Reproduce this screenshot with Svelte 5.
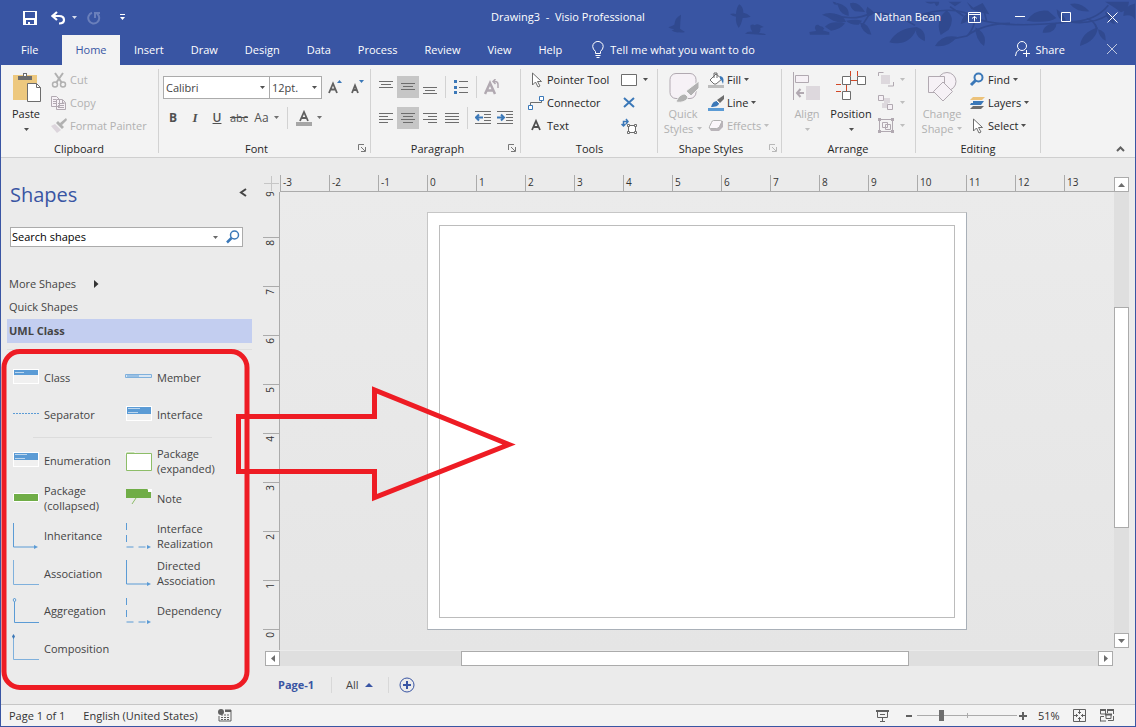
<script>
  const tabs = ['Insert', 'Draw', 'Design', 'Data', 'Process', 'Review', 'View', 'Help'];
  const topTicks = [-3, -2, -1, 0, 1, 2, 3, 4, 5, 6, 7, 8, 9, 10, 11, 12, 13];
  const sideTicks = [8, 7, 6, 5, 4, 3, 2, 1, 0];
  const basics = [
    ['class', 'Class'],
    ['member', 'Member'],
    ['separator', 'Separator'],
    ['interface', 'Interface']
  ];
  const stencils = [
    ['enumeration', 'Enumeration'],
    ['expanded', 'Package (expanded)'],
    ['collapsed', 'Package (collapsed)'],
    ['note', 'Note'],
    ['inherit', 'Inheritance'],
    ['realize', 'Interface Realization'],
    ['assoc', 'Association'],
    ['directed', 'Directed Association'],
    ['aggregate', 'Aggregation'],
    ['depend', 'Dependency'],
    ['compose', 'Composition']
  ];
  let search = $state('Search shapes');
  let zoom = $state(23);
</script>

{#snippet caret()}
  <svg class="caret" width="5" height="3" viewBox="0 0 5 3"><path d="M0 0h5L2.5 3z" fill="currentColor" /></svg>
{/snippet}

{#snippet small(name)}
  <svg width="16" height="16" viewBox="0 0 16 16" fill="none" stroke-width="1">
    {#if name === 'cut'}
      <g stroke="#b1b1b1" stroke-width="2"><path d="M4 1l7 10M12 1L5 11" /><circle cx="4" cy="12.500" r="2.500" stroke-width="1.500" /><circle cx="12" cy="12.500" r="2.500" stroke-width="1.500" /></g>
    {:else if name === 'copy'}
      <g stroke="#b1a9b1" fill="#f6f1f6"><path d="M.5 1.500h5l3 3v7h-8zM5.500 4.500h6l3 3v7h-9z" /><path d="M2 4.500h3M2 6.500h3M2 8.500h3M7 8.500h6M7 10.500h6M7 12.500h6M11.500 5v3H14" /></g>
    {:else if name === 'painter'}
      <path d="M15 0l1 2-5 5-2-2zM7 3l6 6-2 2-6-6z" fill="#b1b1b1" /><path d="M4 6l6 6-4 3L0 8z" fill="#dcd5dc" />
    {:else if name === 'pointer'}
      <path d="M4.500 1v12l3-3 2.500 5 2-1-2.500-4.500h4z" stroke="#6d6d6d" fill="#fff" />
    {:else if name === 'connector'}
      <path d="M2.500 10V7.500H13.500V5" stroke="#6d6d6d" /><path d="M.5 10.500h4v4h-4zM11.500 1.500h4v4h-4z" stroke="#3b78b8" fill="#fff" />
    {:else if name === 'text'}
      <path d="M4 12L8 3l4 9M5.500 9h5" stroke="#505050" stroke-width="1.800" />
    {:else if name === 'rect'}
      <path d="M.5 2.500h15v11H.5z" stroke="#6d6d6d" fill="#fff" />
    {:else if name === 'cross'}
      <path d="M3 3l10 9M13 3L3 12" stroke="#3b78b8" stroke-width="2" />
    {:else if name === 'transform'}
      <path d="M7.500 7.500h7v7h-7z" stroke="#6d6d6d" fill="#fff" /><path d="M6.500 6.500h2v2h-2zM13.500 6.500h2v2h-2zM6.500 13.500h2v2h-2zM13.500 13.500h2v2h-2z" fill="#fff" stroke="#6d6d6d" /><path d="M2.500 8V3.500h4M.5 6l2 2 2-2M5 1l2 2.500L5 6" stroke="#3b78b8" stroke-width="1.500" />
    {:else if name === 'fill'}
      <path d="M0 13h16v3H0z" fill="#bcbcbc" /><path d="M2 8l6-6 6 5-6 5H6z" fill="#fff" stroke="#6d6d6d" /><path d="M6 6V1h3v5" stroke="#6d6d6d" /><path d="M12 4c4 1 4 4 3 8-1-2-1-4-3-5z" fill="#3b78b8" />
    {:else if name === 'line'}
      <path d="M0 13h16v3H0z" fill="#5b9bd5" /><path d="M16 0v4l-4 4-3-3z" fill="#6d6d6d" /><path d="M3 12c1-4 3-6 6-6l2 2c0 3-4 4-8 4z" fill="#3b78b8" /><path d="M9 6l2 2" stroke="#fff" />
    {:else if name === 'effects'}
      <path d="M5 3h10v6l-4 4H3L1 10z" fill="#b9b4b9" /><path d="M5.500 2.500h7q2 0 1 2l-2 4q-1 2-3 2h-6q-2 0-1-2l2-4q.6-2 2-2z" fill="#faf6fa" stroke="#b1b1b1" />
    {:else if name === 'front'}
      <path d="M3 3h9v9H3z" fill="#ddd8dd" /><path d="M.5 4V.5h5M15.500 10v4H10" stroke="#b1a9b1" />
    {:else if name === 'back'}
      <path d="M6 3h6v5H6zM4 8h6v5H4z" fill="#ddd8dd" /><path d="M.5.5h5v5h-5zM9.500 9.500h5v5h-5z" fill="#f6f1f6" stroke="#b1a9b1" />
    {:else if name === 'group'}
      <path d="M0 0h3v3H0zM13 0h3v3h-3zM0 12h3v3H0zM13 12h3v3h-3z" fill="#b1a9b1" /><path d="M3 1.500h10M3 13.500h10M1.500 3v9M14.500 3v9M4.500 4.500h5v5h-5zM7.500 6.500h5v5h-5z" stroke="#b1a9b1" />
    {:else if name === 'find'}
      <circle cx="9.500" cy="5.500" r="4" stroke="#3b78b8" stroke-width="2" /><path d="M6.500 8.500L2 13" stroke="#3b78b8" stroke-width="3" />
    {:else if name === 'layers'}
      <path d="M4 2h12l-3 3H1z" fill="#ecc27a" /><path d="M4 6h11l-3 4H1l1-2h2z" fill="#3b78b8" /><path d="M4 11h11l-3 3H1z" fill="#6d6d6d" />
    {/if}
  </svg>
{/snippet}

{#snippet big(name)}
  <svg width="32" height="32" viewBox="0 0 32 32" fill="none">
    {#if name === 'paste'}
      <path d="M3 4h24v25H3z" fill="#edc87e" /><path d="M8 9V5h5V2h4v3h5v4z" fill="#6d6d6d" /><path d="M14 3h2v2h-2z" fill="#fff" /><path d="M17.500 12.500h9l4 4v14h-13z" fill="#fff" stroke="#6d6d6d" /><path d="M26.500 12.500v4h4" stroke="#6d6d6d" />
    {:else if name === 'quick'}
      <rect x="3" y="2.500" width="26" height="25" rx="6" fill="#f6f1f6" stroke="#b1a9b1" /><path d="M32 10v7l-8 8-5-5z" fill="#b1b1b1" stroke="#f3f3f3" /><path d="M9 31c2-5 5-8 9-8l3 3c-1 4-6 6-12 5z" fill="#b1b1b1" stroke="#f3f3f3" />
    {:else if name === 'align'}
      <path d="M2.500 1v28M4.500 4.500h13v7h-13z" stroke="#b1a9b1" fill="#f6f1f6" /><path d="M15 15h14v14H15z" fill="#ddd8dd" /><path d="M13 22H6M9.500 18L6 22l3.500 4" stroke="#b1a9b1" stroke-width="2" />
    {:else if name === 'position'}
      <path d="M15.500 0v5M22.500 0v5M16 9.500h6M1 13.500h5M1 20.500h5M11.500 14v6" stroke="#d24726" /><path d="M7.500 5.500h8v8h-8zM22.500 5.500h8v8h-8zM7.500 20.500h8v8h-8z" fill="#fff" stroke="#6d6d6d" />
    {:else if name === 'change'}
      <circle cx="21" cy="10.500" r="9" fill="#f6f1f6" stroke="#b1a9b1" /><path d="M2.500 5.500h16v16h-16z" fill="#f6f1f6" stroke="#b1a9b1" /><path d="M17 11l9.500 9.500L17 30l-9.500-9.500z" fill="#f6f1f6" stroke="#b1a9b1" />
    {/if}
  </svg>
{/snippet}

{#snippet para(name)}
  <svg width="16" height="16" viewBox="0 0 16 16" fill="none" stroke="#6d6d6d">
    {#if name === 'top'}<path d="M1 2.500h14M3 5.500h10M1 8.500h14" />
    {:else if name === 'middle'}<path d="M1 4.500h14M3 7.500h10M1 10.500h14" />
    {:else if name === 'bottom'}<path d="M1 8.500h14M3 11.500h10M1 14.500h14" />
    {:else if name === 'left'}<path d="M1 3.500h14M1 6.500h9M1 9.500h14M1 12.500h9" />
    {:else if name === 'center'}<path d="M1 3.500h14M3 6.500h10M1 9.500h14M3 12.500h10" />
    {:else if name === 'right'}<path d="M1 3.500h14M6 6.500h9M1 9.500h14M6 12.500h9" />
    {:else if name === 'justify'}<path d="M1 3.500h14M1 6.500h14M1 9.500h14M1 12.500h14" />
    {:else if name === 'bullets'}<path d="M6 2.500h9M6 8.500h9M6 13.500h9" /><path d="M1 1h3v3H1zM1 7h3v3H1zM1 12h3v3H1z" fill="#3b78b8" stroke="none" />
    {:else if name === 'outdent' || name === 'indent'}
      <path d="M0 1.500h16M9 4.500h7M9 7.500h7M9 10.500h7M0 13.500h16" />
      {#if name === 'outdent'}<path d="M8 7.500H1.500M4 4.500l-3 3 3 3" stroke="#3b78b8" stroke-width="2" />
      {:else}<path d="M0 7.500h6.500M4 4.500l3 3-3 3" stroke="#3b78b8" stroke-width="2" />{/if}
    {:else if name === 'rotate'}
      <path d="M1 15L6 4l5 11M3 11.500h6" stroke="#b1a9b1" stroke-width="2.500" /><path d="M9 2.500h2q3 0 3 3V9M11.500 0L9 2.500 11.500 5" stroke="#b1a9b1" stroke-width="1.500" />
    {/if}
  </svg>
{/snippet}

{#snippet shape(name)}
  <svg width="28" height="28" viewBox="0 0 28 28" fill="none" stroke="#5b9bd5">
    {#if name === 'class' || name === 'interface' || name === 'enumeration'}
      <g stroke="none"><path d="M1 5h26v15H1z" fill="#fff" /><path d="M2 11h24v8H2z" fill="#f0f0f0" />
        {#if name === 'class'}<path d="M2 6h24v5H2z" fill="#5b9bd5" /><path d="M3 8h9v1H3z" fill="#bdd7ee" />
        {:else}<path d="M2 6h24v7H2z" fill="#5b9bd5" /><path d="M3 7h12v1H3zM3 11h10v1H3z" fill="#bdd7ee" />{/if}</g>
    {:else if name === 'member'}
      <path d="M.5 10.500h26v3H.5z" fill="#d9e6f3" stroke="#7fb0dc" /><path d="M2 12h12" stroke="#5b9bd5" />
    {:else if name === 'separator'}<path d="M1 12.500h26" stroke-dasharray="2 1" />
    {:else if name === 'expanded'}
      <path d="M1 5h9v3H1z" fill="#8dbd68" stroke="#fff" /><path d="M1.500 6.500h25v17h-25z" fill="#fff" stroke="#8dbd68" />
    {:else if name === 'collapsed'}<path d="M1.500 9.500h25v8h-25z" fill="#70ad47" stroke="#fff" />
    {:else if name === 'note'}<path d="M1 5h21l4 3v6H1z" fill="#70ad47" stroke="none" /><path d="M23 5v3h4V5z" fill="#fff" stroke="none" /><path d="M11 14l-4 6" stroke="#8dbd68" />
    {:else if name === 'inherit' || name === 'directed'}<path d="M1.500 1v24H24" /><path d="M22 23l4 2-4 2z" fill="#5b9bd5" stroke="none" />
    {:else if name === 'realize' || name === 'depend'}<path d="M1.500 1v24H24" stroke-dasharray="7 5" /><path d="M22 23l4 2-4 2z" fill="#5b9bd5" stroke="none" />
    {:else if name === 'assoc'}<path d="M1.500 1v24.500H27" stroke="#7fb0dc" />
    {:else if name === 'aggregate'}<path d="M2.500 5v20.500H27" /><path d="M2.500 1l1.500 2-1.500 2L1 3z" />
    {:else if name === 'compose'}<path d="M1.500 4v21.500H27" stroke="#7fb0dc" /><path d="M1.500 0L3 2.500 1.500 5 0 2.500z" fill="#3b78b8" stroke="none" />{/if}
  </svg>
{/snippet}

{#snippet magnifier()}
  <svg width="14" height="14" viewBox="0 0 14 14" fill="none" stroke="#3b78b8"><circle cx="8.500" cy="5" r="4" stroke-width="1.500" /><path d="M5.500 8L1 12.500" stroke-width="2.500" /></svg>
{/snippet}

{#snippet foot(label, launcher, off)}
  <div class="foot"><span>{label}</span>
    {#if launcher}
      <button class="launch" class:off aria-label="{label} settings"><svg width="8" height="8" viewBox="0 0 8 8" fill="none" stroke="currentColor"><path d="M.5 6V.5H6M3 3l4 4M7.500 3v4.500H3" /></svg></button>
    {/if}
  </div>
{/snippet}

<div class="app">
  <header>
    <svg class="art" width="495" height="65" viewBox="0 0 1485 195" aria-hidden="true">
      <g fill="#30498f">
        <path d="M85 82q12-4 18-8 2-22 20-30-2 20-3 42l15 10q-10 3-18 1-16 1-22-6l8-3q-12-1-18-6z" />
        <path d="M270 42q10-3 18 0 2-22 10-29 12 8 12 25 12 2 22 12-12 4-24 4-4 20-12 30-10-16-8-34-12-2-18-8z" />
        <path d="M315 101q8-8 22-6-8-10-5-20 8-4 12 1 6-6 14-2l13 7-10 3q2 12-5 15 14 1 22 4l-4 2z" />
        <path d="M508 96l20-3q-6-8-2-16 8-6 13 1 10 0 14 8l-5 5 20 6v7h-58z" />
        <path d="M546 44q22-10 50 0 16 6 22 22-18 4-38-4-16-12-34-18zM555 80q18-20 60-10-14 20-42 22zM590 8q18 4 28 14t8 26q-24-6-28-20zM578 5q12 0 14 10l-10-2zM630 10q24-8 45 26l-30-2q-14-8-15-24zM682 20q-8 16 3 28 18-2 14-14zM660 68q24-2 34 36-26-2-34-36zM618 62q30-6 48 0l-10 12q-24 2-38-12z" />
        <path d="M748 127q24-44 84-46-16 44-52 48-20 2-32-2zM832 82q-14 22 22 42 6-32-22-42zM855 5h42q2 10-8 14l-6-10q-14 6-28-4zM840 48q20-20 60 0-24 18-60 0zM902 105q-18-44 18-74 28 24 6 58zM885 138q20-36 66-28-22 32-66 28zM962 72q8-32 22-30 14 20-22 30zM925 5h40l-20 14zM980 5l20 18 28-14 20 34-30-6-24-10zM1006 82q0 38 26 56 12-36-26-56zM1160 62q24-36 64-30l25 22q-28 18-89 8zM1208 98q2-26 42-30-2 34-42 30zM1250 28q22 14 30 40-30-8-30-40zM1320 138q4-40 54-56-6 42-54 56zM1374 88q24 4 23 34-20-8-23-34zM1290 12q32-8 58 22-40 2-58-22zM1395 5h72q-2 26-24 32-20-16-48-32zM1395 35q22 6 30 38-24-8-30-38zM1450 48q0-30 36-38v50q-10-20-36-12z" />
      </g>
      <g fill="none" stroke="#30498f" stroke-width="5">
        <path d="M585 46q60 18 110-8 70 0 130 38M690 40l-26 40M825 50q120-42 190 8 90 28 270 8 80 0 120-50M1110 70q-80 0-130 38l-50 10M985 104q20-24 20-54M1290 66q70 8 115-22M1370 86q-5-24-30-30M930 20l40 28M1040 64l-10-40" />
      </g>
    </svg>

    <div class="titlebar">
      <div class="quick">
        <button aria-label="Save"><svg width="14" height="14" viewBox="0 0 14 14"><path d="M0 0h14v14H0z" fill="#fff" /><path d="M2 1h10v6H2zM3 9h8v4H7v-2H5v2H3z" fill="#3955a3" /></svg></button>
        <button class="undo" aria-label="Undo"><svg width="15" height="14" viewBox="0 0 15 14" fill="none" stroke="#fff"><path d="M6 1L1.500 5 6 9M2 5h6q5 0 5 4 0 3.500-5 3.500" stroke-width="2.200" /></svg></button>
        <button class="pick" aria-label="Undo list">{@render caret()}</button>
        <button class="redo" aria-label="Repeat"><svg width="14" height="14" viewBox="0 0 14 14" fill="none" stroke="#6a7fbb" stroke-width="2"><path d="M5 1.800a5.500 5.500 0 1 0 5 .8M8 7V2h5" /></svg></button>
        <button aria-label="Customize toolbar"><svg width="7" height="7" viewBox="0 0 7 7" fill="#fff"><path d="M1 0h5v1H1zM1 3h5L3.500 6z" /></svg></button>
      </div>
      <div class="title">Drawing3&nbsp; -&nbsp; Visio Professional</div>
      <div class="window">
        <span>Nathan Bean</span>
        <button aria-label="Ribbon display"><svg width="13" height="11" viewBox="0 0 13 11" fill="none" stroke="#fff"><path d="M.5.5h12v10H.5zM1 2.500h11M6.500 9.500V4.500M4 6.500l2.500-2 2.500 2" /></svg></button>
        <button aria-label="Minimize"><svg width="10" height="10" viewBox="0 0 10 10" stroke="#fff"><path d="M0 4.500h10" /></svg></button>
        <button aria-label="Maximize"><svg width="10" height="10" viewBox="0 0 10 10" stroke="#fff" fill="none"><path d="M.5.5h9v9h-9z" /></svg></button>
        <button aria-label="Close"><svg width="11" height="11" viewBox="0 0 11 11" stroke="#fff"><path d="M.5.5l10 10M10.500.5l-10 10" /></svg></button>
      </div>
    </div>

    <nav>
      <button class="file">File</button>
      <button class="on">Home</button>
      {#each tabs as t}<button>{t}</button>{/each}
      <button class="tell"><svg width="12" height="17" viewBox="0 0 12 17" fill="none" stroke="#fff"><path d="M3.500 12.500V10.500Q.7 8 .7 5.500a5.200 5 0 0 1 10.500 0q0 2.500-2.700 5v2zM3.500 14.500h5M4.500 16.500h3" /></svg>Tell me what you want to do</button>
      <button class="share"><svg width="15" height="16" viewBox="0 0 15 16" fill="none" stroke="#fff"><circle cx="7" cy="5" r="4.500" /><path d="M.5 15q0-5 4-6.500M11.500 9v7M8 12.500h7" /></svg>Share</button>
      <button class="shut" aria-label="Close ribbon"><svg width="10" height="10" viewBox="0 0 10 10" stroke="#c0c8de"><path d="M0 0l10 10M10 0L0 10" /></svg></button>
    </nav>
  </header>

  <section class="ribbon">
    <div class="group clipboard">
      <div class="tools">
        <button class="big">{@render big('paste')}<span>Paste</span><i>{@render caret()}</i></button>
        <div class="col">
          <button class="cmd off">{@render small('cut')}Cut</button>
          <button class="cmd off">{@render small('copy')}Copy</button>
          <button class="cmd off">{@render small('painter')}Format Painter</button>
        </div>
      </div>
      {@render foot('Clipboard')}
    </div>

    <div class="group font">
      <div class="rows">
        <div class="row">
          <label class="combo family"><select aria-label="Font"><option>Calibri</option></select>{@render caret()}</label>
          <label class="combo size"><select aria-label="Font size"><option>12pt.</option></select>{@render caret()}</label>
          <button class="sq grow" aria-label="Grow font"><svg width="14" height="16" viewBox="0 0 14 16" fill="none"><path d="M1 14L5 4.500 9 14M2.500 10.500h5" stroke="#606060" stroke-width="1.800" /><path d="M9 4h5l-2.500-3z" fill="#3b78b8" /></svg></button>
          <button class="sq" aria-label="Shrink font"><svg width="14" height="16" viewBox="0 0 14 16" fill="none"><path d="M2 14l3-7.500L8 14M3 11h4" stroke="#606060" stroke-width="1.800" /><path d="M9 1h5l-2.500 3z" fill="#3b78b8" /></svg></button>
        </div>
        <div class="row letters">
          <button class="sq"><b>B</b></button>
          <button class="sq"><em>I</em></button>
          <button class="sq"><u>U</u></button>
          <button class="sq"><s>abc</s></button>
          <button class="sq wide case">Aa{@render caret()}</button>
          <hr />
          <button class="sq wide" aria-label="Font color"><svg width="16" height="16" viewBox="0 0 16 16" fill="none"><path d="M4 11L8 2l4 9M5.500 8h5" stroke="#606060" stroke-width="1.800" /><path d="M0 12h16v4H0z" fill="#a6a6a6" /></svg>{@render caret()}</button>
        </div>
      </div>
      {@render foot('Font', true)}
    </div>

    <div class="group paragraph">
      <div class="rows">
        <div class="row">
          {#each ['top', 'middle', 'bottom'] as p}<button class="sq" class:sel={p === 'middle'} aria-label={p}>{@render para(p)}</button>{/each}
          <hr /><button class="sq" aria-label="Bullets">{@render para('bullets')}</button>
          <hr /><button class="sq" aria-label="Rotate text">{@render para('rotate')}</button>
        </div>
        <div class="row">
          {#each ['left', 'center', 'right', 'justify'] as p}<button class="sq" class:sel={p === 'center'} aria-label={p}>{@render para(p)}</button>{/each}
          <hr /><button class="sq" aria-label="Decrease indent">{@render para('outdent')}</button><button class="sq" aria-label="Increase indent">{@render para('indent')}</button>
        </div>
      </div>
      {@render foot('Paragraph', true)}
    </div>

    <div class="group pointers">
      <div class="tools">
        <div class="col first">
          <button class="cmd">{@render small('pointer')}Pointer Tool</button>
          <button class="cmd">{@render small('connector')}Connector</button>
          <button class="cmd">{@render small('text')}Text</button>
        </div>
        <div class="col">
          <button class="cmd icononly" aria-label="Rectangle">{@render small('rect')}{@render caret()}</button>
          <button class="cmd" aria-label="Connection point">{@render small('cross')}</button>
          <button class="cmd" aria-label="Text block">{@render small('transform')}</button>
        </div>
      </div>
      {@render foot('Tools')}
    </div>

    <div class="group styles">
      <div class="tools">
        <button class="big off">{@render big('quick')}<span>Quick</span><span>Styles {@render caret()}</span></button>
        <div class="col">
          <button class="cmd">{@render small('fill')}Fill{@render caret()}</button>
          <button class="cmd">{@render small('line')}Line{@render caret()}</button>
          <button class="cmd off">{@render small('effects')}Effects{@render caret()}</button>
        </div>
      </div>
      {@render foot('Shape Styles', true, true)}
    </div>

    <div class="group arrange">
      <div class="tools">
        <button class="big off">{@render big('align')}<span>Align</span><i>{@render caret()}</i></button>
        <button class="big">{@render big('position')}<span>Position</span><i>{@render caret()}</i></button>
        <div class="col">
          <button class="cmd off icononly" aria-label="Bring to front">{@render small('front')}{@render caret()}</button>
          <button class="cmd off icononly" aria-label="Send to back">{@render small('back')}{@render caret()}</button>
          <button class="cmd off icononly" aria-label="Group">{@render small('group')}{@render caret()}</button>
        </div>
      </div>
      {@render foot('Arrange')}
    </div>

    <div class="group editing">
      <div class="tools">
        <button class="big off">{@render big('change')}<span>Change</span><span>Shape {@render caret()}</span></button>
        <div class="col">
          <button class="cmd">{@render small('find')}Find{@render caret()}</button>
          <button class="cmd">{@render small('layers')}Layers{@render caret()}</button>
          <button class="cmd">{@render small('pointer')}Select{@render caret()}</button>
        </div>
      </div>
      {@render foot('Editing')}
    </div>
    <button class="collapse" aria-label="Collapse ribbon"><svg width="9" height="6" viewBox="0 0 9 6" fill="none" stroke="#606060" stroke-width="2"><path d="M1 5l3.500-3.500L8 5" /></svg></button>
  </section>

  <main>
    <aside>
      <div class="head"><h1>Shapes</h1><button aria-label="Minimize panel"><svg width="8" height="9" viewBox="0 0 8 9" fill="none" stroke="#444" stroke-width="2"><path d="M7 1L2 4.500 7 8" /></svg></button></div>
      <div class="search"><input aria-label="Search shapes" bind:value={search} />{@render caret()}<button aria-label="Search">{@render magnifier()}</button></div>
      <button class="link">More Shapes <svg width="5" height="8" viewBox="0 0 5 8"><path d="M0 0l4.500 4L0 8z" fill="#333" /></svg></button>
      <button class="link">Quick Shapes</button>
      <button class="link current">UML Class</button>
      <div class="stencil basic">
        {#each basics as [k, label]}<button>{@render shape(k)}<span>{label}</span></button>{/each}
      </div>
      <div class="stencil">
        {#each stencils as [k, label]}<button>{@render shape(k)}<span>{label}</span></button>{/each}
      </div>
    </aside>

    <section class="work">
      <svg class="corner" width="17" height="17" viewBox="0 0 17 17" stroke="#c6c6c6"><path d="M8.500 1v15M1 8.500h15" /></svg>
      <div class="ruler across">{#each topTicks as n}<span>{n}</span>{/each}</div>
      <div class="ruler down"><span class="lead">9</span>{#each sideTicks as n}<span>{n}</span>{/each}</div>
      <div class="canvas"><div class="page"><div class="margin"></div></div></div>
      <div class="bar vertical">
        <button aria-label="Scroll up"><svg width="7" height="4" viewBox="0 0 7 4"><path d="M0 4h7L3.500 0z" fill="#6d6d6d" /></svg></button>
        <div class="before"></div><div class="thumb"></div><div class="after"></div>
        <button aria-label="Scroll down"><svg width="7" height="4" viewBox="0 0 7 4"><path d="M0 0h7L3.500 4z" fill="#6d6d6d" /></svg></button>
      </div>
      <div class="bar horizontal">
        <button aria-label="Scroll left"><svg width="4" height="7" viewBox="0 0 4 7"><path d="M4 0v7L0 3.500z" fill="#6d6d6d" /></svg></button>
        <div class="before"></div><div class="thumb"></div><div class="after"></div>
        <button aria-label="Scroll right"><svg width="4" height="7" viewBox="0 0 4 7"><path d="M0 0v7l4-3.500z" fill="#6d6d6d" /></svg></button>
      </div>
      <div class="pages">
        <button class="active">Page-1</button>
        <button class="all">All <svg width="8" height="4" viewBox="0 0 8 4"><path d="M0 4h8L4 0z" fill="#3955a3" /></svg></button>
        <button class="add" aria-label="Insert page"><svg width="16" height="16" viewBox="0 0 16 16" fill="none" stroke="#3955a3"><circle cx="8" cy="8" r="7" /><path d="M8 4v8M4 8h8" stroke-width="2" /></svg></button>
      </div>
    </section>

    <svg class="callout" width="520" height="546" viewBox="0 0 520 546" fill="none" stroke="#ee1c24" stroke-width="5" aria-hidden="true">
      <rect x="3" y="193.500" width="243" height="336" rx="16" />
      <path d="M237.500 258.500H373.500V232L508 286.500 373.500 339.500V313.500H237.500z" />
    </svg>
  </main>

  <footer>
    <span class="count">Page 1 of 1</span>
    <button class="lang">English (United States)</button>
    <button aria-label="Macros"><svg width="14" height="13" viewBox="0 0 14 13"><path d="M7 1h6v11H1V7" fill="none" stroke="#606060" /><path d="M7 1h6v2H7z" fill="#606060" /><circle cx="3" cy="3" r="3" fill="#606060" /><path d="M3 6h9M3 8.500h9M3 10.500h9" stroke="#606060" stroke-dasharray="2 1" /></svg></button>
    <div class="right">
      <button aria-label="Presentation"><svg width="13" height="12" viewBox="0 0 13 12" fill="none" stroke="#606060"><path d="M0 1h13" stroke-width="2" /><path d="M1.500 2v5.500h10V2M4 4.500h5M6.500 8v3.500M4 11.500h5" /></svg></button>
      <button class="minus" aria-label="Zoom out"><svg width="7" height="8" viewBox="0 0 7 8"><path d="M0 4h6" stroke="#606060" stroke-width="2" /></svg></button>
      <input type="range" min="0" max="100" aria-label="Zoom" bind:value={zoom} />
      <button class="plus" aria-label="Zoom in"><svg width="8" height="8" viewBox="0 0 8 8"><path d="M0 4h8M4 0v8" stroke="#606060" stroke-width="2" /></svg></button>
      <span class="pct">51%</span>
      <button class="fit" aria-label="Fit page"><svg width="13" height="13" viewBox="0 0 13 13" fill="none" stroke="#606060"><path d="M.5.5h12v12H.5z" /><path d="M6.500 1v4M6.500 8v4M1 6.500h4M8 6.500h4M5 3.500h3M5 9.500h3M3.500 5v3M9.500 5v3" /></svg></button>
      <button aria-label="Switch windows"><svg width="14" height="13" viewBox="0 0 14 13" fill="none" stroke="#606060"><path d="M.5 5V1.500h5V5zM8 1.500h5.500V5M7.500 1v3M6 5.500h5v4H6zM.5 12.500v-5H4M.5 12H6M13.500 7v4.500H8" /><path d="M0 1h6M7 1h7M5 5.500h7" stroke-width="2" /></svg></button>
    </div>
  </footer>
</div>

<style>
  :global(body) { margin: 0; }
  .app { box-sizing: border-box; min-height: 100vh; display: flex; flex-direction: column; border: solid #3955a3; border-width: 0 1px 1px; background: #ebebeb; color: #262626; font: 11px/15px 'Open Sans', 'Noto Sans', sans-serif; overflow: hidden; }
  button { display: flex; align-items: center; margin: 0; padding: 0; border: 0; background: none; color: inherit; font: inherit; white-space: nowrap; }
  svg { flex: none; display: block; }
  .off { color: #b1b1b1; }

  header { position: relative; background: #3955a3; color: #fff; }
  .art { position: absolute; top: 0; right: 0; }
  .titlebar, nav { position: relative; display: flex; }
  .titlebar { height: 35px; display: grid; grid-template-columns: 1fr auto 1fr; align-items: center; }
  .title, .window span { padding-bottom: 2px; }
  .quick { display: flex; align-items: center; padding-left: 22px; }
  .undo { margin-left: 14px; }
  .pick { margin-left: 6px; }
  .redo { margin: 0 18px 0 10px; }
  .window { display: flex; justify-content: flex-end; align-items: center; }
  .window span { margin-right: 10px; }
  .window button { width: 46px; height: 34px; padding-bottom: 1px; justify-content: center; }
  nav { height: 30px; }
  nav button { padding: 0 13px 2px 14px; height: 30px; }
  nav .file { width: 61px; padding: 0 20px 2px; }
  nav .on { width: 58px; padding: 0 0 2px; justify-content: center; background: #f3f3f3; color: #3955a3; }
  nav .tell { gap: 6px; padding-left: 17px; }
  nav .share { margin-left: auto; padding: 0 24px 2px 0; gap: 5px; }
  nav .shut { width: 46px; padding: 0 0 2px; justify-content: center; }

  .ribbon { display: flex; background: #f3f3f3; border-bottom: 1px solid #cfcfcf; }
  .group { position: relative; display: flex; flex-direction: column; box-sizing: border-box; flex: none; padding: 3px 1px 0 3px; height: 92px; }
  .group::after { content: ''; position: absolute; right: 0; top: 4px; bottom: 4px; width: 1px; background: #d2d2d2; }
  .clipboard { width: 158px; }
  .font { width: 212px; padding-left: 4px; }
  .paragraph { width: 150px; padding-left: 4px; }
  .pointers { width: 137px; padding-left: 5px; }
  .styles { width: 124px; }
  .arrange { width: 134px; }
  .editing { width: 125px; padding-left: 4px; }
  .tools { display: flex; height: 69px; }
  .big { width: 44px; flex: none; flex-direction: column; padding-top: 3px; }
  .big > svg { margin-bottom: 3px; }
  .big span { display: flex; align-items: center; gap: 4px; height: 15px; }
  .big i { height: 17px; display: flex; align-items: center; }
  .caret { opacity: .8; }
  .col { margin-left: 1px; }
  .arrange .col, .editing .col { margin-left: 3px; }
  .cmd { height: 23px; padding: 0 2px; gap: 3px; }
  .icononly { gap: 6px; }
  .first { width: 92px; margin-left: 0; }
  .foot { display: flex; height: 20px; align-items: center; margin-left: -4px; padding-top: 2px; box-sizing: border-box; }
  .foot span { flex: 1; text-align: center; }
  .launch { width: 16px; color: #777; justify-content: center; }
  .launch.off { color: #b8b8b8; }
  .rows { height: 69px; box-sizing: border-box; padding-top: 8px; display: grid; align-content: start; gap: 9px; }
  .row { display: flex; height: 22px; }
  .letters { margin-left: -1px; }
  .sq { width: 22px; height: 22px; justify-content: center; color: #505050; }
  .letters .sq { padding-bottom: 1px; }
  .sq.wide { width: 33px; gap: 5px; }
  .sq.grow { margin-left: 2px; }
  .sq.sel { background: #c6c6c6; }
  .sq.case { font-size: 12px; }
  .sq b { font-size: 12px; }
  .sq em { font: italic bold 13px 'Liberation Serif', serif; }
  .sq u { font-weight: 600; font-size: 12px; }
  .row hr { width: 1px; margin: 0 4px; border: 0; background: #d2d2d2; }
  .combo { position: relative; display: flex; align-items: center; box-sizing: border-box; height: 23px; border: 1px solid #ababab; background: #fff; }
  .combo select { appearance: none; width: 100%; height: 100%; border: 0; padding: 0 2px; background: none; color: #444; font: inherit; }
  .combo .caret { position: absolute; right: 4px; }
  .family { width: 107px; }
  .size { width: 52px; border-left: 0; }
  .collapse { margin: auto 10px 5px auto; }

  main { position: relative; flex: 1; display: flex; }
  aside { width: 251px; flex: none; color: #444; }
  .head { display: flex; align-items: center; justify-content: space-between; padding: 22px 5px 0 9px; height: 30px; }
  .head h1 { margin: 0; font-weight: 400; font-size: 20px; line-height: 30px; color: #3955a3; }
  .head button { margin-bottom: 6px; }
  .search { display: flex; align-items: center; box-sizing: border-box; height: 20px; margin: 17px 9px 25px; border: 1px solid #ababab; background: #fff; }
  .search input { flex: 1; min-width: 0; border: 0; padding: 0 1px 2px; background: none; color: #000; font: inherit; outline: 0; }
  .search button { margin: 0 2px 0 8px; }
  .link { height: 23px; padding-left: 8px; gap: 18px; }
  .link.current { width: 245px; height: 24px; margin: 1px 0 6px 6px; padding: 0 0 2px 2px; background: #c3cef0; font-weight: 700; }
  .stencil { display: grid; grid-template-columns: 113px 1fr; grid-auto-rows: 37px 38px; margin-left: 11px; }
  .stencil.basic { grid-auto-rows: 37px; padding: 9px 0 5px; border-top: 1px solid #dfdfdf; margin-left: 6px; padding-left: 5px; position: relative; }
  .basic { margin-bottom: 4px; }
  .basic::after { content: ''; position: absolute; left: 26px; right: 40px; bottom: 0; height: 1px; background: #dcdcdc; }
  .stencil button { gap: 4px; text-align: left; white-space: normal; }
  .stencil span { max-width: 70px; }

  .work { flex: 1; min-width: 0; display: grid; grid-template-columns: 17px minmax(0, 1fr) 15px; grid-template-rows: 17px minmax(457px, 1fr) 15px 39px; padding: 17px 6px 0 11px; }
  .ruler { display: flex; box-sizing: border-box; overflow: hidden; font-size: 10px; line-height: 14px; color: #333; }
  .across { border-bottom: 1px solid #ababab; }
  .across span { box-sizing: border-box; flex: none; width: 49px; padding-left: 2px; border-left: 1px solid #ababab; }
  .down { contain: size; flex-direction: column; border-right: 1px solid #ababab; }
  .down span { box-sizing: border-box; flex: none; height: 49px; border-top: 1px solid #ababab; writing-mode: sideways-lr; padding-top: 2px; text-align: right; line-height: 14px; }
  .down .lead { height: 49px; margin-top: -4px; }
  .canvas { display: flex; justify-content: center; align-items: flex-start; padding-top: 20px; background: linear-gradient(#ebebeb, #e5e5e5); }
  .page { box-sizing: border-box; width: 540px; height: 418px; padding: 12px 11px 11px; border: 1px solid #c6c6c6; border-right-color: #a9b0b8; border-bottom-color: #a9b0b8; background: #fff; }
  .margin { box-sizing: border-box; height: 100%; border: 1px solid #bcbcbc; }
  .bar { display: flex; }
  .bar button { box-sizing: border-box; width: 15px; height: 15px; flex: none; justify-content: center; border: 1px solid #ababab; background: #fff; }
  .before, .after { background: #dfdfdf; }
  .thumb { box-sizing: border-box; border: 1px solid #ababab; background: #fff; }
  .vertical { grid-area: 1 / 3 / 3 / 4; flex-direction: column; margin: 2px 0; }
  .vertical .before { flex: 115; }
  .vertical .thumb { flex: 220; }
  .vertical .after { flex: 105; }
  .horizontal { grid-column: 1 / 3; grid-row: 3; margin: 1px 1px -1px 2px; }
  .horizontal .before { flex: 181; }
  .horizontal .thumb { flex: 448; }
  .horizontal .after { flex: 189; }
  .down, .corner { grid-column: 1; }
  .pages { grid-column: 1 / 4; display: flex; align-items: center; padding-left: 15px; }
  .pages button { height: 16px; padding-right: 15px; border-right: 1px solid #d8d8d8; color: #444; }
  .pages .active { padding-right: 17px; font-weight: 700; color: #3955a3; }
  .pages .all { padding: 0 15px 0 14px; gap: 6px; }
  .pages .add { border: 0; padding-left: 10px; }
  .callout { position: absolute; left: 0; top: 0; pointer-events: none; }

  footer { display: flex; align-items: center; height: 21px; border-top: 1px solid #c6c6c6; background: #f3f3f3; padding-left: 8px; color: #333; }
  .lang { margin: 0 20px 0 18px; }
  .right { display: flex; align-items: center; margin-left: auto; padding-right: 21px; }
  .minus { margin: 0 4px 0 17px; }
  .plus { margin: 0 11px 0 2px; }
  .pct { width: 35px; }
  .fit { margin-right: 14px; }
  footer input { appearance: none; width: 100px; height: 12px; margin: 0; background: linear-gradient(#ababab, #ababab) center / 100% 1px no-repeat, linear-gradient(#ababab, #ababab) center / 1px 5px no-repeat; }
  footer input::-webkit-slider-thumb { appearance: none; width: 5px; height: 11px; background: #6d6d6d; border-radius: 0; }
</style>
